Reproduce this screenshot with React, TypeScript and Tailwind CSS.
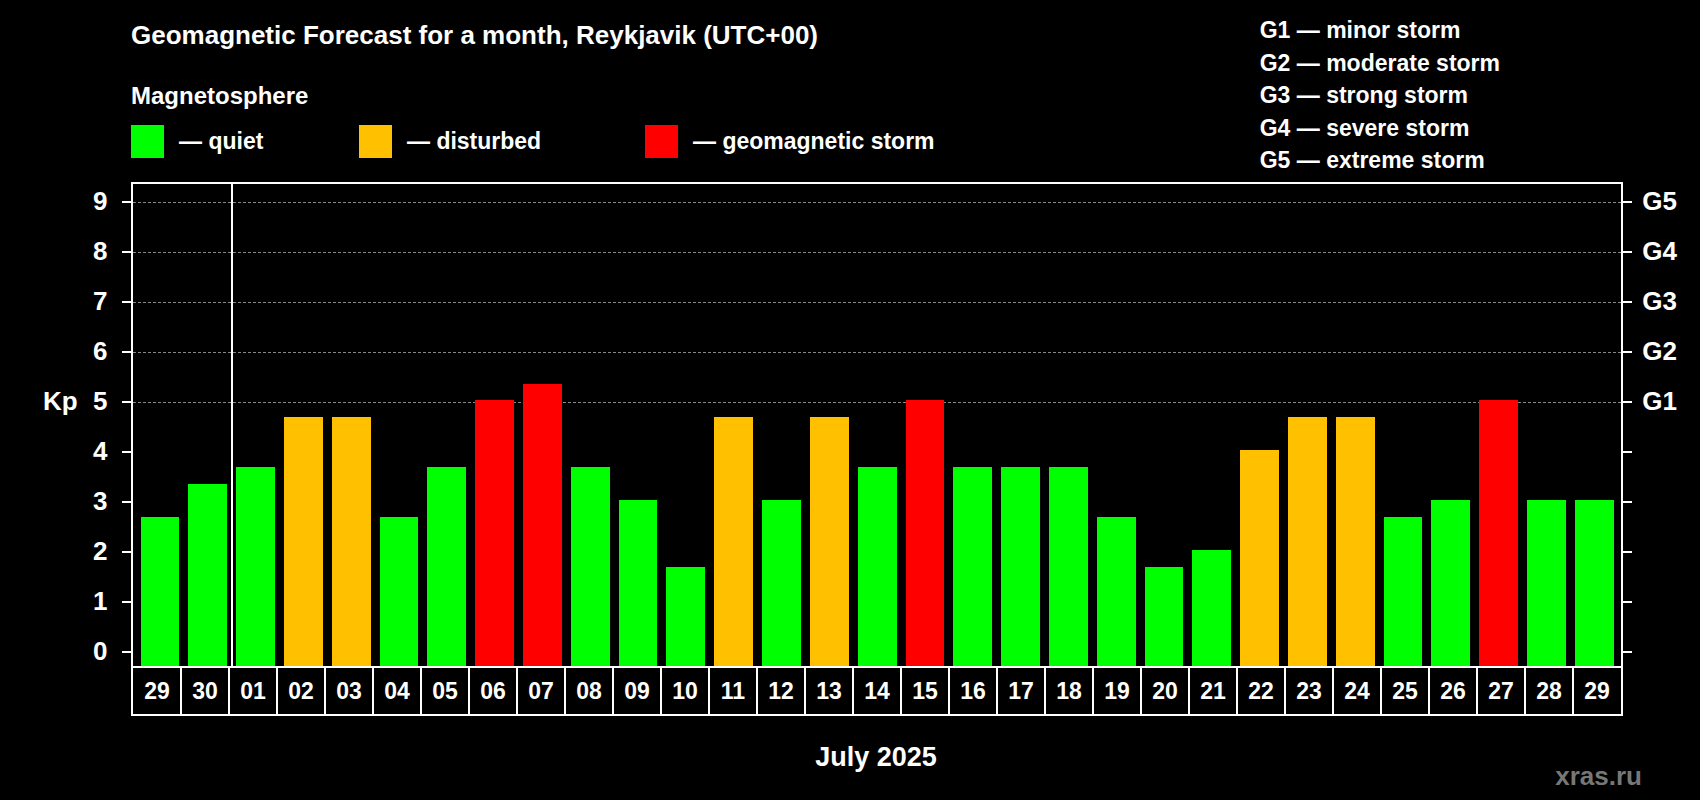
const DAYS: [string, number][] = [
  ['29', 2.67], ['30', 3.33], ['01', 3.67], ['02', 4.67], ['03', 4.67], ['04', 2.67], ['05', 3.67],
  ['06', 5], ['07', 5.33], ['08', 3.67], ['09', 3], ['10', 1.67], ['11', 4.67], ['12', 3],
  ['13', 4.67], ['14', 3.67], ['15', 5], ['16', 3.67], ['17', 3.67], ['18', 3.67], ['19', 2.67],
  ['20', 1.67], ['21', 2], ['22', 4], ['23', 4.67], ['24', 4.67], ['25', 2.67], ['26', 3],
  ['27', 5], ['28', 3], ['29', 3],
];

const G = ['G1 — minor storm', 'G2 — moderate storm', 'G3 — strong storm', 'G4 — severe storm', 'G5 — extreme storm'];

function colour(v: number) {
  if (v >= 5) return 'bg-[#ff0000]';
  if (v >= 4) return 'bg-[#ffc000]';
  return 'bg-[#00ff00]';
}

export default function App() {
  const levels = [0, 1, 2, 3, 4, 5, 6, 7, 8, 9];
  return (
    <div className="w-[1700px] h-[800px] bg-black text-white font-bold relative overflow-hidden" style={{ fontFamily: '"Liberation Sans", Arial, sans-serif' }}>
      {/* Header */}
      <div className="flex justify-between pl-[131px] pr-[200px] pt-[20px]">
        <div>
          <div className="text-[26px] leading-[30px]">Geomagnetic Forecast for a month, Reykjavik (UTC+00)</div>
          <div className="text-[24px] leading-[28px] mt-[32px]">Magnetosphere</div>
          <div className="flex items-center mt-[14px] text-[23px]">
            <span className="w-[33px] h-[33px] bg-[#00ff00]" />
            <span className="ml-[15px] w-[180px]">— quiet</span>
            <span className="w-[33px] h-[33px] bg-[#ffc000]" />
            <span className="ml-[15px] w-[238px]">— disturbed</span>
            <span className="w-[33px] h-[33px] bg-[#ff0000]" />
            <span className="ml-[15px]">— geomagnetic storm</span>
          </div>
        </div>
        <div className="text-[23px] leading-[32.5px] -mt-[6px]">
          {G.map(g => <div key={g}>{g}</div>)}
        </div>
      </div>

      {/* Chart */}
      <div className="absolute left-[131px] top-[182px] w-[1492px]">
        <div className="relative h-[486px] border-2 border-white">
          {levels.map(l => (
            <div key={l} className="absolute left-0 right-0" style={{ top: 470 - 50 * l - 2 - 16 + 16 - 0 + 0 - 0 - 0 + 0 - 0 - 16 + 16 - 0 + 0 - 0 + 0 - 0 - 0 + 0 - 0 - 0 + 0 - 0 + 0 - 0 + 0 - 0 - 0 + 0 - 0 - 0 + 0 - 0 + 0 - 0 + 0 - 0 - 0 + 0 - 0 + 0 - 0 - 0 + 0 - 0 + 0 - 0 + 0 - 0 + 0 - 0 + 0 - 0 - 0 + 0 - 0 + 0 - 0 - 0 - 0 + 0 - 0 - 0 + 0 - 0 + 0 - 0 - 0 + 0 - 0 + 0 - 0 - 0 + 0 - 0 + 0 - 0 + 0 - 0 + 0 }}>
              {l >= 5 && <div className="border-t border-dashed border-[#888]" />}
              <div className="absolute -left-[11px] -top-[1px] w-[9px] h-[2px] bg-white" />
              <div className="absolute -right-[11px] -top-[1px] w-[9px] h-[2px] bg-white" />
              <div className="absolute -left-[40px] -top-[16px] text-[26px] leading-[30px]">{l}</div>
              {l >= 5 && <div className="absolute -right-[56px] -top-[16px] text-[26px] leading-[30px]">G{l - 4}</div>}
            </div>
          ))}
          <div className="absolute left-[98px] top-0 bottom-0 w-[2px] bg-white" />
          <div className="absolute inset-0 flex items-end px-[3px]">
            {DAYS.map(([d, v], i) => (
              <div key={i} className="flex-1 px-[4.5px]">
                <div className={colour(v)} style={{ height: 16 + 50 * v }} />
              </div>
            ))}
          </div>
        </div>
        <div className="flex h-[48px] border-2 border-t-0 border-white px-[1px]">
          {DAYS.map(([d], i) => (
            <div key={i} className={`flex-1 flex items-center justify-center text-[23px] ${i > 0 ? 'border-l-2 border-white' : ''}`}>{d}</div>
          ))}
        </div>
      </div>

      <div className="absolute left-[43px] top-[382px] text-[26px]">Kp</div>
      <div className="absolute left-0 right-0 top-[737px] text-center text-[27px] pl-[0px]" style={{ paddingRight: 0 }}>
        <span className="relative left-[26px]">July 2025</span>
      </div>
      <div className="absolute right-[58px] top-[757px] text-[26px] text-[#777]">xras.ru</div>
    </div>
  );
}
